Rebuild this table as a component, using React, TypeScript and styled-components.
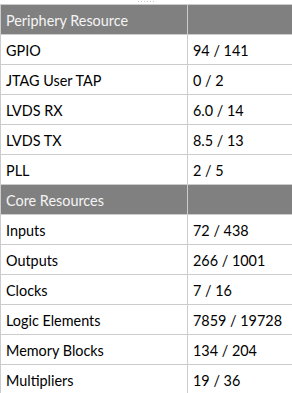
import React from 'react';
import styled, { createGlobalStyle } from 'styled-components';

const GlobalStyle = createGlobalStyle`
    html, body {
        margin: 0;
        padding: 0;
        background: #ffffff;
    }
    body {
        font-family: Lato, "Open Sans", sans-serif;
    }
`;

interface resourceGroup {
    title: string;
    rows: [string, string][];
}

const groups: resourceGroup[] = [
    {
        title: 'Periphery Resource',
        rows: [
            ['GPIO', '94 / 141'],
            ['JTAG User TAP', '0 / 2'],
            ['LVDS RX', '6.0 / 14'],
            ['LVDS TX', '8.5 / 13'],
            ['PLL', '2 / 5'],
        ],
    },
    {
        title: 'Core Resources',
        rows: [
            ['Inputs', '72 / 438'],
            ['Outputs', '266 / 1001'],
            ['Clocks', '7 / 16'],
            ['Logic Elements', '7859 / 19728'],
            ['Memory Blocks', '134 / 204'],
            ['Multipliers', '19 / 36'],
        ],
    },
];

export default function App() {
    return (
        <>
            <GlobalStyle />
            <Panel>
                <Grip>
                    {[0, 1, 2, 3, 4, 5].map(i => <Dot key={i} />)}
                </Grip>
                <ResourceTable>
                    <colgroup>
                        <col style={{ width: 187 }} />
                        <col />
                    </colgroup>
                    {groups.map(group => (
                        <tbody key={group.title}>
                            <tr>
                                <HeadCell>{group.title}</HeadCell>
                                <HeadCell $last />
                            </tr>
                            {group.rows.map(([name, usage]) => (
                                <tr key={name}>
                                    <Cell>{name}</Cell>
                                    <Cell $last>{usage}</Cell>
                                </tr>
                            ))}
                        </tbody>
                    ))}
                </ResourceTable>
            </Panel>
        </>
    );
}

const Panel = styled.div`
    width: 292px;
    height: 393px;
    overflow: hidden;
`;

const Grip = styled.div`
    display: flex;
    justify-content: center;
    gap: 2px;
    height: 4px;
    padding-top: 1px;
    box-sizing: border-box;
`;

const Dot = styled.span`
    width: 1px;
    height: 1px;
    background: #c8c8c8;
`;

const ResourceTable = styled.table`
    width: 100%;
    border-collapse: collapse;
    table-layout: fixed;
    border-left: 1px solid #cccccc;
    border-top: 1px solid #cccccc;
`;

const Cell = styled.td<{ $last?: boolean }>`
    height: 30px;
    padding: 2px 5px 0 5px;
    box-sizing: border-box;
    border-right: ${p => (p.$last ? 'none' : '1px solid #cccccc')};
    border-bottom: 1px solid #cccccc;
    font-size: 14.4px;
    color: #000000;
    white-space: nowrap;
`;

const HeadCell = styled(Cell)`
    background: #808080;
    color: #f4f4f4;
`;
